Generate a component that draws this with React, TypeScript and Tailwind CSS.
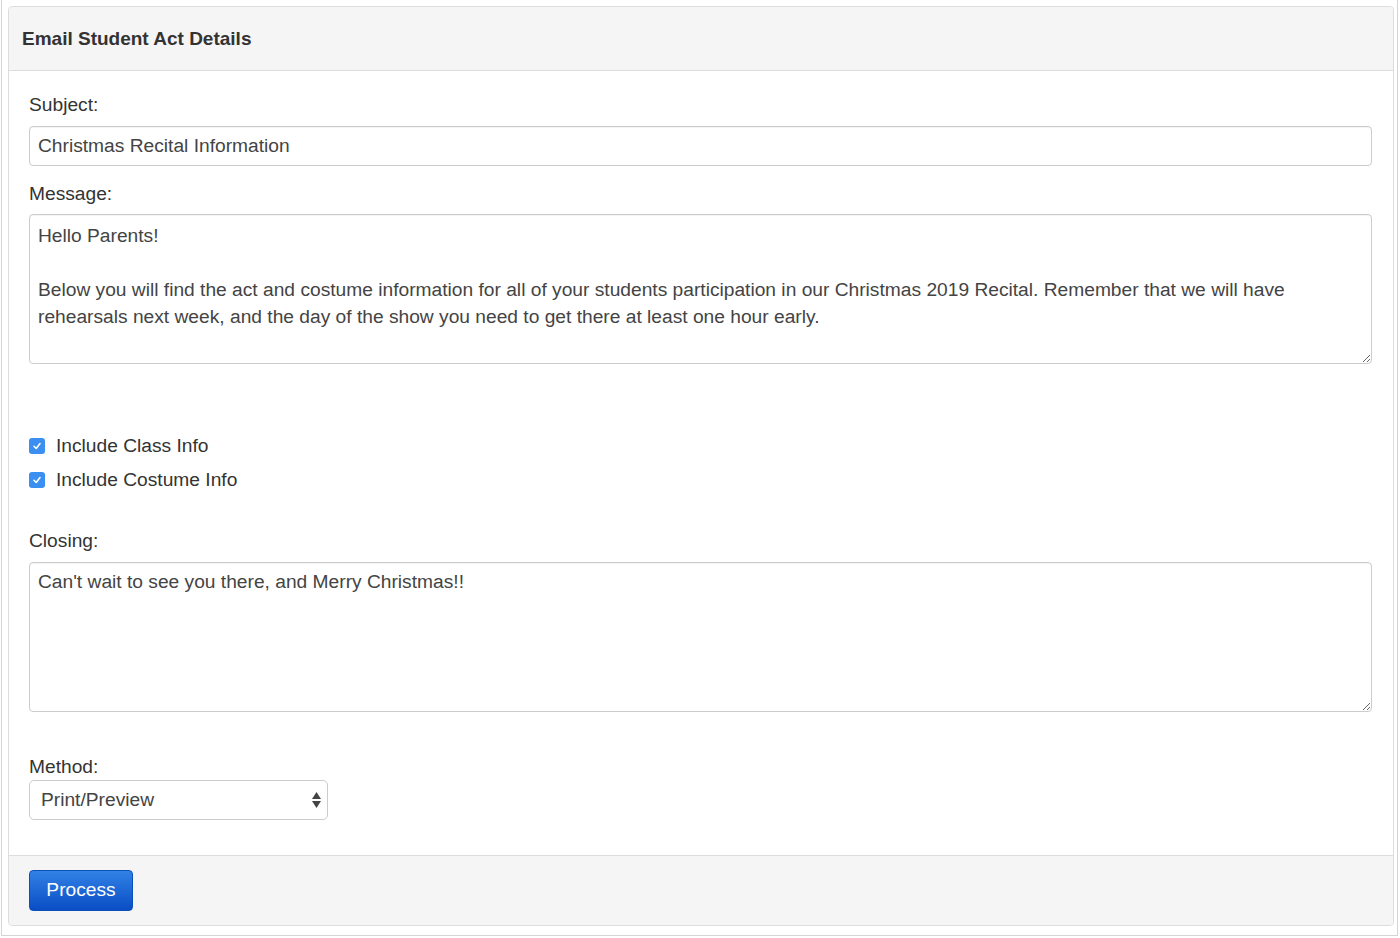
import React from "react";

function Check() {
  return (
    <span className="flex h-[16px] w-[16px] items-center justify-center rounded-[3px] bg-[#3b8ff0]">
      <svg width="10" height="10" viewBox="0 0 10 10" fill="none">
        <path d="M2 5.3 L4.2 7.5 L8 2.6" stroke="white" strokeWidth="1.6" strokeLinecap="round" strokeLinejoin="round" />
      </svg>
    </span>
  );
}

export default function App() {
  const msg =
    "Hello Parents!\n\nBelow you will find the act and costume information for all of your students participation in our Christmas 2019 Recital. Remember that we will have rehearsals next week, and the day of the show you need to get there at least one hour early.";
  return (
    <div className="h-[938px] w-[1400px] bg-white" style={{ fontFamily: '"Liberation Sans", Arial, sans-serif' }}>
      <div className="ml-[1px] h-[936px] w-[1397px] border-x border-b border-[#d4d4d4] pt-[6px] pl-[6px] pr-[3px]">
        <div className="flex h-[920px] flex-col rounded-[4px] border border-[#dddddd] text-[#333333]">
          <div className="flex h-[64px] items-center rounded-t-[4px] border-b border-[#dddddd] bg-[#f5f5f5] px-[13px] pt-[1px]">
            <span className="text-[19px] font-bold">Email Student Act Details</span>
          </div>
          <div className="flex-1 pl-[20px] pr-[21px] pt-[22px]">
            <div className="text-[19.2px] leading-[24px]">Subject:</div>
            <input
              className="mt-[9px] block h-[40px] w-full rounded-[4px] border border-[#cccccc] px-[8px] text-[19.2px] text-[#444] outline-none shadow-[inset_0_1px_1px_rgba(0,0,0,0.05)]"
              defaultValue="Christmas Recital Information"
            />
            <div className="mt-[16px] text-[19.2px] leading-[24px]">Message:</div>
            <textarea
              className="mt-[8px] block h-[150px] w-full resize-y rounded-[4px] border border-[#cccccc] px-[8px] pt-[7px] text-[19.2px] leading-[27px] text-[#444] outline-none shadow-[inset_0_1px_1px_rgba(0,0,0,0.05)]"
              defaultValue={msg}
            />
            <div className="mt-[74px] flex flex-col gap-[18px]">
              <label className="flex items-center gap-[11px] text-[19.2px] leading-[16px]">
                <Check />
                <span>Include Class Info</span>
              </label>
              <label className="flex items-center gap-[11px] text-[19.2px] leading-[16px]">
                <Check />
                <span>Include Costume Info</span>
              </label>
            </div>
            <div className="mt-[41px] text-[19.2px] leading-[24px]">Closing:</div>
            <textarea
              className="mt-[9px] block h-[150px] w-full resize-y rounded-[4px] border border-[#cccccc] px-[8px] pt-[5px] text-[19.2px] leading-[27px] text-[#444] outline-none shadow-[inset_0_1px_1px_rgba(0,0,0,0.05)]"
              defaultValue="Can't wait to see you there, and Merry Christmas!!"
            />
            <div className="mt-[43px] text-[19.2px] leading-[24px]">Method:</div>
            <div className="relative mt-[1px] flex h-[40px] w-[299px] items-center rounded-[5px] border border-[#cccccc] bg-white px-[11px] text-[19.2px] text-[#444]">
              <span>Print/Preview</span>
              <svg className="absolute right-[5px] top-[10px]" width="11" height="18" viewBox="0 0 11 18">
                <path d="M5.5 1 L10 8 L1 8 Z" fill="#444" />
                <path d="M5.5 17 L10 10 L1 10 Z" fill="#444" />
              </svg>
            </div>
          </div>
          <div className="flex h-[70px] items-center rounded-b-[4px] border-t border-[#dddddd] bg-[#f5f5f5] px-[20px]">
            <button className="h-[41px] w-[104px] rounded-[4px] border border-[#0b4fb8] bg-gradient-to-b from-[#3181e6] to-[#0a4dc4] text-[19.2px] text-white">
              Process
            </button>
          </div>
        </div>
      </div>
    </div>
  );
}
